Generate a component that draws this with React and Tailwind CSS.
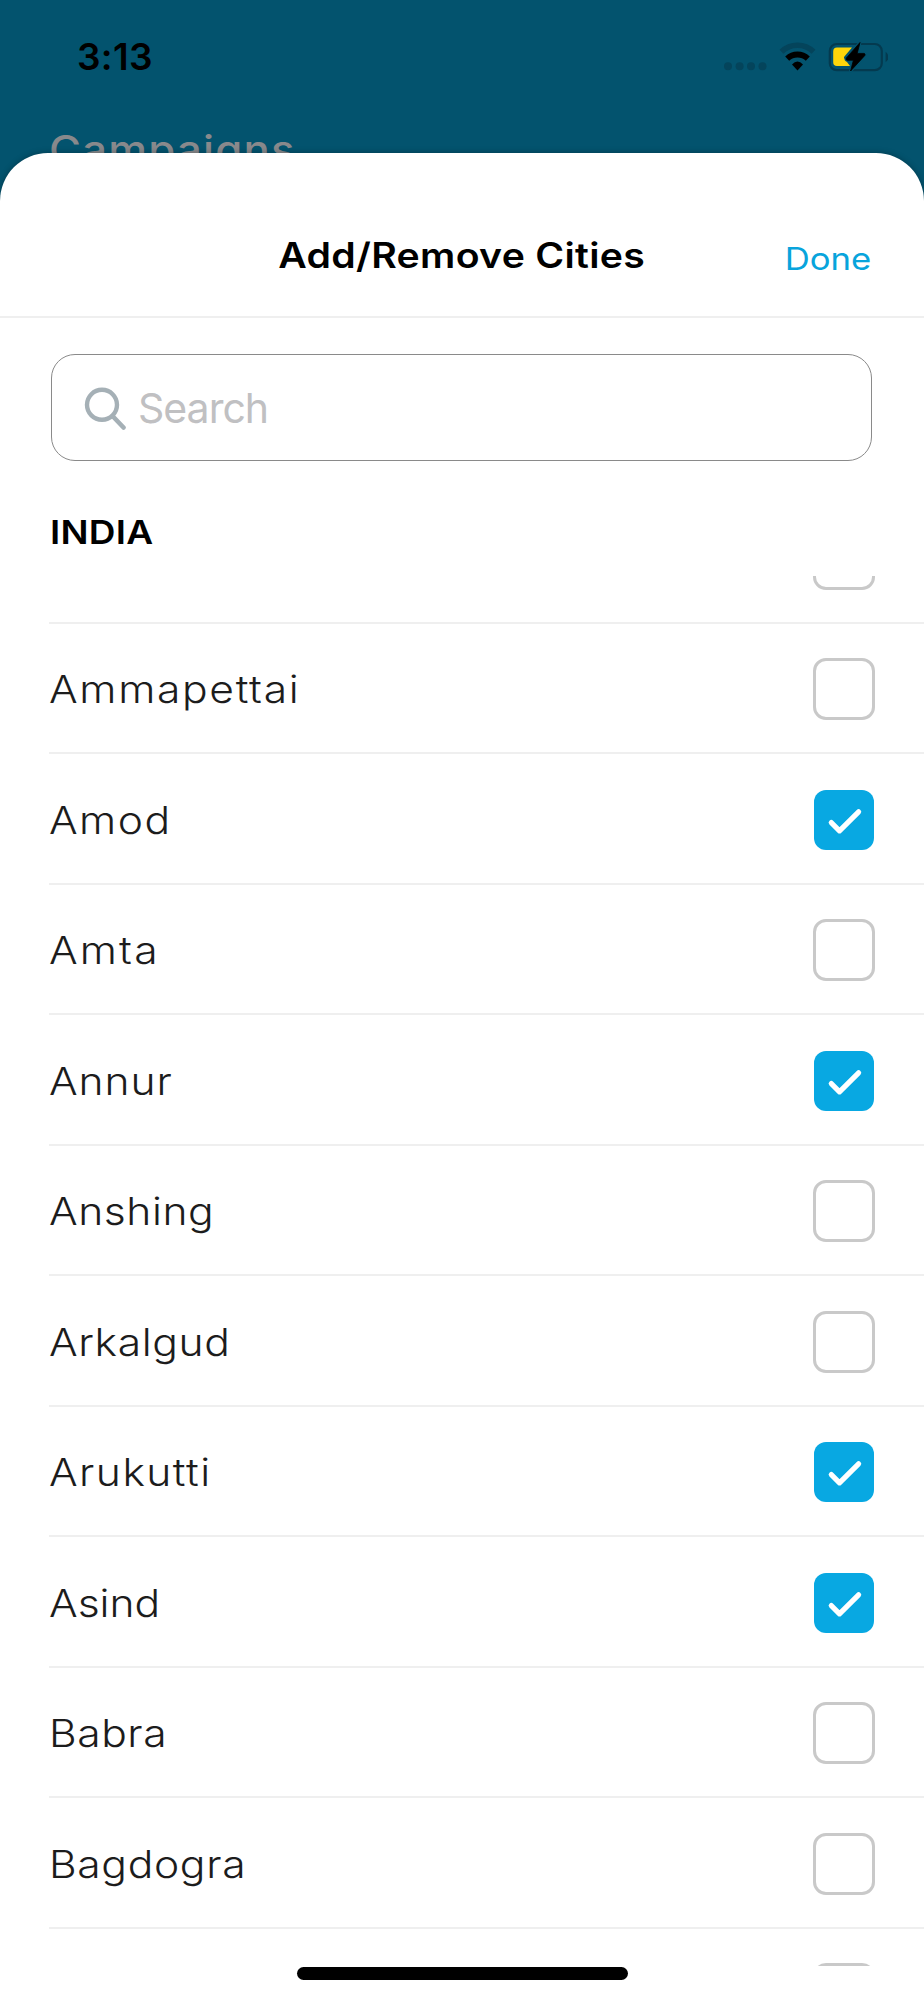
const cities = [
  { name: 'Ammapettai', checked: false, tracking: 'tracking-[1.5px]' },
  { name: 'Amod', checked: true, tracking: 'tracking-[1.3px]' },
  { name: 'Amta', checked: false, tracking: 'tracking-[1.9px]' },
  { name: 'Annur', checked: true, tracking: 'tracking-[0.83px]' },
  { name: 'Anshing', checked: false, tracking: 'tracking-[0.5px]' },
  { name: 'Arkalgud', checked: false, tracking: 'tracking-[0.55px]' },
  { name: 'Arukutti', checked: true, tracking: 'tracking-[1.3px]' },
  { name: 'Asind', checked: true, tracking: 'tracking-[0px]' },
  { name: 'Babra', checked: false, tracking: 'tracking-[0.5px]' },
  { name: 'Bagdogra', checked: false, tracking: 'tracking-[0.6px]' },
];

function Checkbox({ checked }) {
  if (checked) {
    return (
      <span className="mr-px flex size-[60px] items-center justify-center rounded-[12px] bg-[#08a8e2]">
        <svg viewBox="0 0 60 60" className="size-full" fill="none" stroke="#fff" strokeWidth="5.2" strokeLinecap="round" strokeLinejoin="round">
          <path d="M17.3 32.6 L25.5 40.8 L44.6 21.8" />
        </svg>
      </span>
    );
  }
  return <span className="size-[62px] rounded-[13px] border-[3px] border-[#c9c9c9] bg-white" />;
}

function CityRow({ name, checked, tracking }) {
  return (
    <li className="ml-[49px] flex h-[130.5px] shrink-0 items-center justify-between border-b-2 border-[#efefef] pt-[3px] pr-[49px]">
      <span className={`origin-left scale-x-[1.12] text-[38px] leading-[50px] font-light text-[#1c1c1c] ${tracking}`}>{name}</span>
      <Checkbox checked={checked} />
    </li>
  );
}

function StatusBar() {
  return (
    <div className="flex h-[114px] items-center justify-between pr-[36px] pl-[77px]">
      <span className="text-[37px] leading-[50px] font-semibold tracking-[0.3px] text-black">3:13</span>
      <svg className="h-[40px] w-[164px]" viewBox="724 37 164 40" fill="none">
        <g fill="#04445b">
          <circle cx="728" cy="66.3" r="4" />
          <circle cx="739.6" cy="66.3" r="4" />
          <circle cx="751" cy="66.3" r="4" />
          <circle cx="762.5" cy="66.3" r="4" />
        </g>
        <path d="M781.5 51.8 A23 23 0 0 1 813.5 51.8" stroke="#04445b" strokeWidth="5.6" />
        <path d="M787.2 58.6 A15 15 0 0 1 807.8 58.6" stroke="#000" strokeWidth="5.8" />
        <path d="M792 64.6 Q797.5 58.6 803 64.6 L797.5 70.4 Z" fill="#000" />
        <rect x="829.8" y="44" width="52" height="26.2" rx="7" stroke="#043a4f" strokeWidth="2.2" />
        <path d="M885.6 51.8 Q888.4 54 888.4 57 Q888.4 60 885.6 62.2 Z" fill="#043a4f" />
        <path d="M837 47.6 H852 L844 57 V66 H837 Q833.2 66 833.2 62.2 V51.4 Q833.2 47.6 837 47.6 Z" fill="#ffd60a" />
        <path d="M844 58 L850 66 H844 Z" fill="#ffd60a" />
        <path d="M860 42.5 L846.2 58.2 Q845.6 60.2 847.2 60.2 H853.4 L850.6 71 L864.9 55.4 Q865.6 53.6 864 53.4 H857.2 Z" stroke="#03536e" strokeWidth="3" strokeLinejoin="round" />
        <path d="M860 42.5 L846.2 58.2 Q845.6 60.2 847.2 60.2 H853.4 L850.6 71 L864.9 55.4 Q865.6 53.6 864 53.4 H857.2 Z" fill="#000" stroke="#000" strokeWidth="0.8" strokeLinejoin="round" />
      </svg>
    </div>
  );
}

export default function App() {
  return (
    <div className="flex h-[2000px] w-[924px] flex-col overflow-hidden bg-[#03536e] font-['Inter',sans-serif]">
      <header className="h-[153px] shrink-0">
        <StatusBar />
        <div className="ml-[49px] h-[50px] w-[400px] origin-left scale-x-[1.12] pt-[11px] text-[39px] leading-[50px] font-medium tracking-[1.1px] whitespace-nowrap text-[#88898c]">
          Campaigns
        </div>
      </header>

      <main className="relative flex grow flex-col rounded-t-[48px] bg-white shadow-[0_0_6px_rgba(0,0,0,0.3)]">
        <div className="grid h-[165px] shrink-0 grid-cols-[1fr_auto_1fr] items-center border-b-[2px] border-[#efefef] pt-[41px]">
          <span />
          <h1 className="scale-x-[1.12] text-[35px] leading-[44px] font-semibold tracking-[0.26px] text-black">Add/Remove Cities</h1>
          <button className="mr-[53px] origin-right scale-x-[1.12] justify-self-end pt-[8px] text-[31px] leading-[40px] font-normal text-[#08a4dc]">Done</button>
        </div>

        <div className="mt-[36px] mr-[52px] ml-[51px] flex h-[107px] shrink-0 items-center rounded-[24px] border border-[#8a8a8a] pl-[32px]">
          <svg className="h-[44px] w-[44px]" viewBox="84 386 44 44" fill="none" stroke="#a5b0b6" strokeLinecap="round">
            <circle cx="102" cy="404.8" r="15" strokeWidth="4.4" />
            <path d="M113 416.5 L123.5 427.5" strokeWidth="4.6" />
          </svg>
          <span className="ml-[10px] text-[41px] leading-[50px] font-normal tracking-[-1px] text-[#c0c0c2]">Search</span>
        </div>

        <h2 className="mt-[46px] ml-[50px] h-[69px] shrink-0 origin-left scale-x-[1.12] text-[33px] leading-[50px] font-semibold tracking-[0.25px] text-black">INDIA</h2>

        <div className="h-[1390px] shrink-0 overflow-hidden">
          <ul className="-mt-[83px] flex flex-col">
            <CityRow name="" checked={false} tracking="" />
            {cities.map((city) => (
              <CityRow key={city.name} {...city} />
            ))}
            <CityRow name="" checked={false} tracking="" />
          </ul>
        </div>

        <div className="mt-px ml-[297px] h-[13px] w-[331px] shrink-0 rounded-full bg-black" />
      </main>
    </div>
  );
}
